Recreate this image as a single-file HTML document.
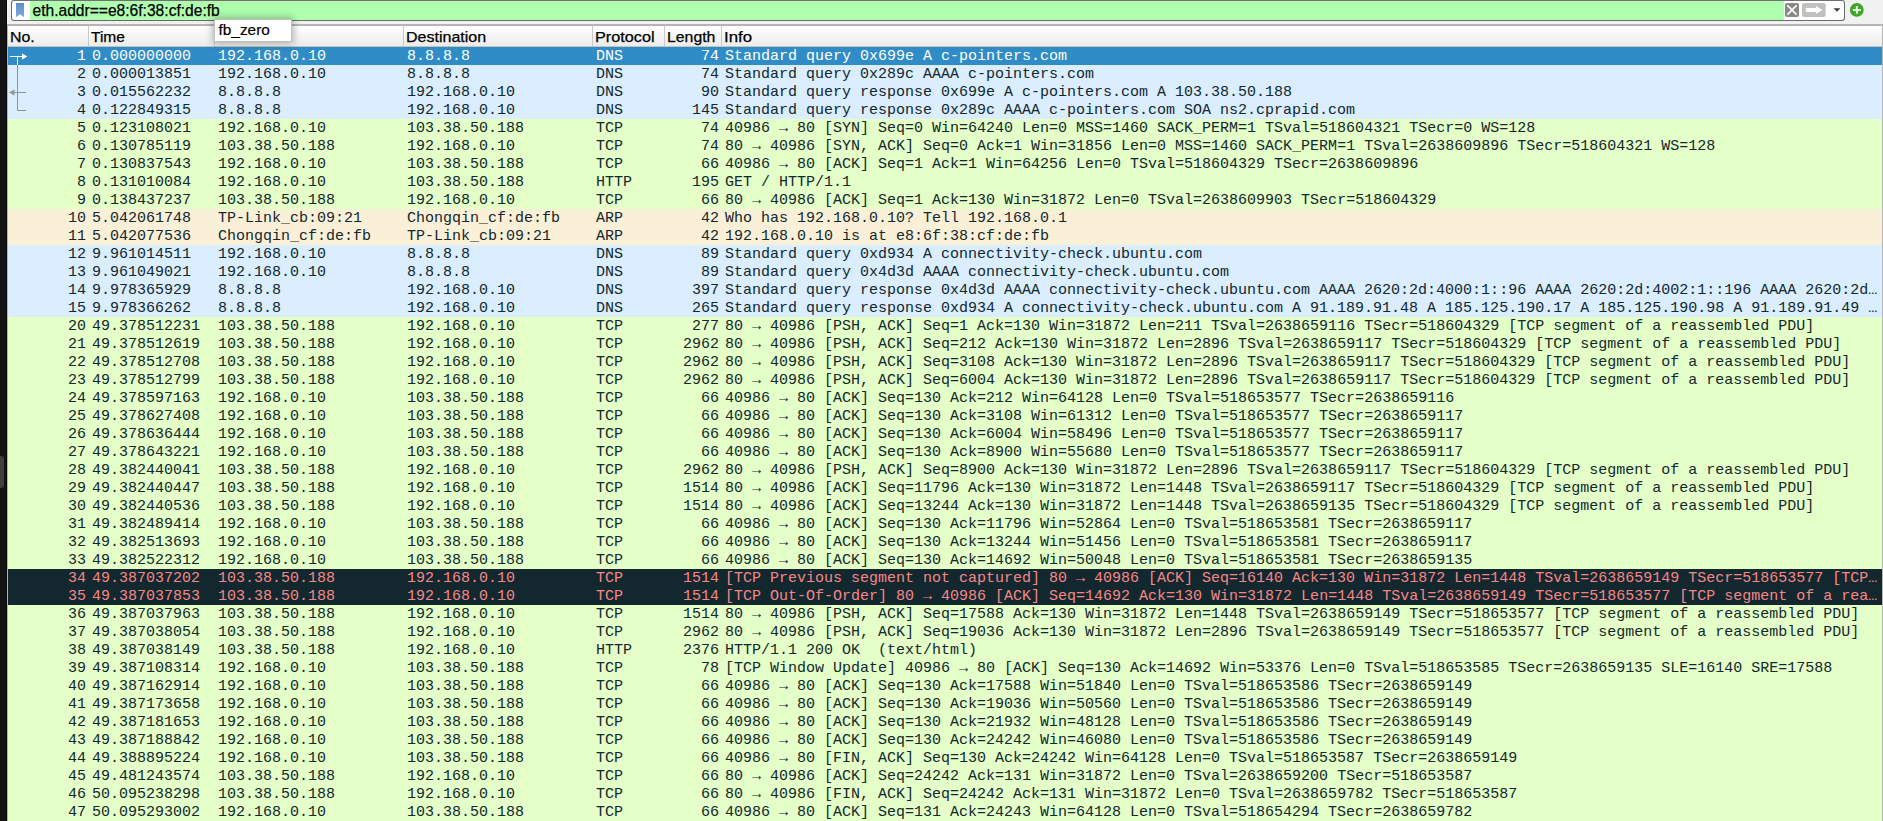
<!DOCTYPE html>
<html><head><meta charset="utf-8"><title>Wireshark</title>
<style>
html,body{margin:0;padding:0;}
body{width:1883px;height:821px;overflow:hidden;background:#f1f1f1;position:relative;font-family:"Liberation Sans",sans-serif;}
#strip{position:absolute;left:0;top:0;width:6px;height:821px;background:#141414;border-right:1px solid #0a0a0a;}
#pill{position:absolute;left:0;top:456px;width:4px;height:32px;background:#404040;border-radius:0 3px 3px 0;}
#fbox{position:absolute;left:11px;top:0px;width:1832px;height:19px;border:1px solid #6a6a6a;border-top-color:#707070;border-radius:3px;background:#fff;overflow:hidden;}
#fgreen{position:absolute;left:18px;top:0;width:1754px;height:19px;background:#afffaf;}
#ftext{-webkit-text-stroke:0.25px #000;position:absolute;left:32.5px;top:1.5px;font-size:15.6px;line-height:18px;color:#000;white-space:pre;}
#sepline{position:absolute;left:7px;top:24px;width:1876px;height:797px;background:#b6b6b6;}
#hdr{position:absolute;left:8px;top:26px;width:1874px;height:20px;background:linear-gradient(#ffffff,#ececec);border-bottom:1px solid #c8c2bc;}
#hdr span{-webkit-text-stroke:0.25px #000;position:absolute;top:2px;font-size:15px;line-height:18px;color:#000;white-space:pre;transform-origin:0 50%;}
#hdr b{position:absolute;top:0px;width:1px;height:20px;background:#c9c9c9;}
#tbl{position:absolute;left:8px;top:47px;width:1874px;height:774px;overflow:hidden;font-family:"Liberation Mono",monospace;font-size:15px;color:#12272e;}
.r{position:absolute;left:0;width:1874px;height:18px;line-height:18px;white-space:pre;overflow:hidden;}
.r span{position:absolute;top:1px;height:18px;}
.r i{font-style:normal;}
.n{left:0;width:78px;text-align:right;}
.t{left:84px;}
.s{left:210px;}
.d{left:399px;}
.p{left:588px;}
.l{left:600px;width:111px;text-align:right;}
.i{left:717px;}
.dns{background:#daeeff;}
.tcp{background:#e4ffc7;}
.arp{background:#faf0d7;}
.bad{background:#12272e;color:#f78787;}
.sel{background:#308cc6;color:#fff;}
#tip{position:absolute;left:214px;top:19px;width:76px;height:21px;background:#fff;border:1px solid #c0c0c0;box-shadow:0 0 8px 1px rgba(0,0,0,0.33);}
#tip span{-webkit-text-stroke:0.2px #000;position:absolute;left:3.5px;top:0.5px;font-size:15.4px;line-height:18px;color:#000;}
</style></head><body>
<div id="strip"></div><div id="pill"></div>
<div id="fbox"><div id="fgreen"></div>
<svg style="position:absolute;left:0;top:-1px" width="20" height="21" viewBox="0 0 20 21"><defs><linearGradient id="bm" x1="0" y1="0" x2="0" y2="1"><stop offset="0" stop-color="#5f8fcb"/><stop offset="1" stop-color="#7ea9dc"/></linearGradient></defs><path d="M4 3h8v14.2l-4-3-4 3z" fill="url(#bm)"/></svg>
</div>
<div id="ftext">eth.addr==e8:6f:38:cf:de:fb</div>
<svg id="icons" style="position:absolute;left:1780px;top:0" width="90" height="21" viewBox="1780 0 90 21">
<rect x="1785" y="3" width="14" height="14" rx="2.2" fill="#888a85"/>
<path d="M1787.4 5.4l9.2 9.2M1796.6 5.4l-9.2 9.2" stroke="#fff" stroke-width="1.5" fill="none"/>
<rect x="1802" y="3" width="23.7" height="14" rx="2.2" fill="#c0c0c0"/>
<path d="M1805.8 8.1h10.1V6l6.5 4.05-6.5 4.05v-2.1h-10.1z" fill="#fff"/>
<path d="M1833.6 8.2h6.8l-3.4 3.6z" fill="#3c3c3c"/>
<circle cx="1856.8" cy="9.9" r="6.9" fill="#3ea72b"/>
<path d="M1852.9 9.9h7.9M1856.85 6.1v7.7" stroke="#e6f4e1" stroke-width="2" fill="none"/>
</svg>
<div id="sepline"></div>
<div id="hdr">
<span style="left:2px;transform:scaleX(1.06)">No.</span><span style="left:83px;transform:scaleX(1.035)">Time</span><span style="left:209px;transform:scaleX(1.06);clip-path:inset(0 0 6px 0)">Source</span><span style="left:398px;transform:scaleX(1.068)">Destination</span><span style="left:587px;transform:scaleX(1.083)">Protocol</span><span style="left:659px;transform:scaleX(1.055)">Length</span><span style="left:716px;transform:scaleX(1.12)">Info</span>
<b style="left:80px"></b><b style="left:206px"></b><b style="left:395px"></b><b style="left:584px"></b><b style="left:656px"></b><b style="left:713px"></b>
</div>
<div id="tbl">
<div class="r sel" style="top:0px"><span class="n">1</span><span class="t">0.000000000</span><span class="s">192.168.0.10</span><span class="d">8.8.8.8</span><span class="p">DNS</span><span class="l">74</span><span class="i">Standard query 0x699e A c-pointers.com</span></div>
<div class="r dns" style="top:18px"><span class="n">2</span><span class="t">0.000013851</span><span class="s">192.168.0.10</span><span class="d">8.8.8.8</span><span class="p">DNS</span><span class="l">74</span><span class="i">Standard query 0x289c AAAA c-pointers.com</span></div>
<div class="r dns" style="top:36px"><span class="n">3</span><span class="t">0.015562232</span><span class="s">8.8.8.8</span><span class="d">192.168.0.10</span><span class="p">DNS</span><span class="l">90</span><span class="i">Standard query response 0x699e A c-pointers.com A 103.38.50.188</span></div>
<div class="r dns" style="top:54px"><span class="n">4</span><span class="t">0.122849315</span><span class="s">8.8.8.8</span><span class="d">192.168.0.10</span><span class="p">DNS</span><span class="l">145</span><span class="i">Standard query response 0x289c AAAA c-pointers.com SOA ns2.cprapid.com</span></div>
<div class="r tcp" style="top:72px"><span class="n">5</span><span class="t">0.123108021</span><span class="s">192.168.0.10</span><span class="d">103.38.50.188</span><span class="p">TCP</span><span class="l">74</span><span class="i">40986 <i>→</i> 80 [SYN] Seq=0 Win=64240 Len=0 MSS=1460 SACK_PERM=1 TSval=518604321 TSecr=0 WS=128</span></div>
<div class="r tcp" style="top:90px"><span class="n">6</span><span class="t">0.130785119</span><span class="s">103.38.50.188</span><span class="d">192.168.0.10</span><span class="p">TCP</span><span class="l">74</span><span class="i">80 <i>→</i> 40986 [SYN, ACK] Seq=0 Ack=1 Win=31856 Len=0 MSS=1460 SACK_PERM=1 TSval=2638609896 TSecr=518604321 WS=128</span></div>
<div class="r tcp" style="top:108px"><span class="n">7</span><span class="t">0.130837543</span><span class="s">192.168.0.10</span><span class="d">103.38.50.188</span><span class="p">TCP</span><span class="l">66</span><span class="i">40986 <i>→</i> 80 [ACK] Seq=1 Ack=1 Win=64256 Len=0 TSval=518604329 TSecr=2638609896</span></div>
<div class="r tcp" style="top:126px"><span class="n">8</span><span class="t">0.131010084</span><span class="s">192.168.0.10</span><span class="d">103.38.50.188</span><span class="p">HTTP</span><span class="l">195</span><span class="i">GET / HTTP/1.1</span></div>
<div class="r tcp" style="top:144px"><span class="n">9</span><span class="t">0.138437237</span><span class="s">103.38.50.188</span><span class="d">192.168.0.10</span><span class="p">TCP</span><span class="l">66</span><span class="i">80 <i>→</i> 40986 [ACK] Seq=1 Ack=130 Win=31872 Len=0 TSval=2638609903 TSecr=518604329</span></div>
<div class="r arp" style="top:162px"><span class="n">10</span><span class="t">5.042061748</span><span class="s">TP-Link_cb:09:21</span><span class="d">Chongqin_cf:de:fb</span><span class="p">ARP</span><span class="l">42</span><span class="i">Who has 192.168.0.10? Tell 192.168.0.1</span></div>
<div class="r arp" style="top:180px"><span class="n">11</span><span class="t">5.042077536</span><span class="s">Chongqin_cf:de:fb</span><span class="d">TP-Link_cb:09:21</span><span class="p">ARP</span><span class="l">42</span><span class="i">192.168.0.10 is at e8:6f:38:cf:de:fb</span></div>
<div class="r dns" style="top:198px"><span class="n">12</span><span class="t">9.961014511</span><span class="s">192.168.0.10</span><span class="d">8.8.8.8</span><span class="p">DNS</span><span class="l">89</span><span class="i">Standard query 0xd934 A connectivity-check.ubuntu.com</span></div>
<div class="r dns" style="top:216px"><span class="n">13</span><span class="t">9.961049021</span><span class="s">192.168.0.10</span><span class="d">8.8.8.8</span><span class="p">DNS</span><span class="l">89</span><span class="i">Standard query 0x4d3d AAAA connectivity-check.ubuntu.com</span></div>
<div class="r dns" style="top:234px"><span class="n">14</span><span class="t">9.978365929</span><span class="s">8.8.8.8</span><span class="d">192.168.0.10</span><span class="p">DNS</span><span class="l">397</span><span class="i">Standard query response 0x4d3d AAAA connectivity-check.ubuntu.com AAAA 2620:2d:4000:1::96 AAAA 2620:2d:4002:1::196 AAAA 2620:2d…</span></div>
<div class="r dns" style="top:252px"><span class="n">15</span><span class="t">9.978366262</span><span class="s">8.8.8.8</span><span class="d">192.168.0.10</span><span class="p">DNS</span><span class="l">265</span><span class="i">Standard query response 0xd934 A connectivity-check.ubuntu.com A 91.189.91.48 A 185.125.190.17 A 185.125.190.98 A 91.189.91.49 …</span></div>
<div class="r tcp" style="top:270px"><span class="n">20</span><span class="t">49.378512231</span><span class="s">103.38.50.188</span><span class="d">192.168.0.10</span><span class="p">TCP</span><span class="l">277</span><span class="i">80 <i>→</i> 40986 [PSH, ACK] Seq=1 Ack=130 Win=31872 Len=211 TSval=2638659116 TSecr=518604329 [TCP segment of a reassembled PDU]</span></div>
<div class="r tcp" style="top:288px"><span class="n">21</span><span class="t">49.378512619</span><span class="s">103.38.50.188</span><span class="d">192.168.0.10</span><span class="p">TCP</span><span class="l">2962</span><span class="i">80 <i>→</i> 40986 [PSH, ACK] Seq=212 Ack=130 Win=31872 Len=2896 TSval=2638659117 TSecr=518604329 [TCP segment of a reassembled PDU]</span></div>
<div class="r tcp" style="top:306px"><span class="n">22</span><span class="t">49.378512708</span><span class="s">103.38.50.188</span><span class="d">192.168.0.10</span><span class="p">TCP</span><span class="l">2962</span><span class="i">80 <i>→</i> 40986 [PSH, ACK] Seq=3108 Ack=130 Win=31872 Len=2896 TSval=2638659117 TSecr=518604329 [TCP segment of a reassembled PDU]</span></div>
<div class="r tcp" style="top:324px"><span class="n">23</span><span class="t">49.378512799</span><span class="s">103.38.50.188</span><span class="d">192.168.0.10</span><span class="p">TCP</span><span class="l">2962</span><span class="i">80 <i>→</i> 40986 [PSH, ACK] Seq=6004 Ack=130 Win=31872 Len=2896 TSval=2638659117 TSecr=518604329 [TCP segment of a reassembled PDU]</span></div>
<div class="r tcp" style="top:342px"><span class="n">24</span><span class="t">49.378597163</span><span class="s">192.168.0.10</span><span class="d">103.38.50.188</span><span class="p">TCP</span><span class="l">66</span><span class="i">40986 <i>→</i> 80 [ACK] Seq=130 Ack=212 Win=64128 Len=0 TSval=518653577 TSecr=2638659116</span></div>
<div class="r tcp" style="top:360px"><span class="n">25</span><span class="t">49.378627408</span><span class="s">192.168.0.10</span><span class="d">103.38.50.188</span><span class="p">TCP</span><span class="l">66</span><span class="i">40986 <i>→</i> 80 [ACK] Seq=130 Ack=3108 Win=61312 Len=0 TSval=518653577 TSecr=2638659117</span></div>
<div class="r tcp" style="top:378px"><span class="n">26</span><span class="t">49.378636444</span><span class="s">192.168.0.10</span><span class="d">103.38.50.188</span><span class="p">TCP</span><span class="l">66</span><span class="i">40986 <i>→</i> 80 [ACK] Seq=130 Ack=6004 Win=58496 Len=0 TSval=518653577 TSecr=2638659117</span></div>
<div class="r tcp" style="top:396px"><span class="n">27</span><span class="t">49.378643221</span><span class="s">192.168.0.10</span><span class="d">103.38.50.188</span><span class="p">TCP</span><span class="l">66</span><span class="i">40986 <i>→</i> 80 [ACK] Seq=130 Ack=8900 Win=55680 Len=0 TSval=518653577 TSecr=2638659117</span></div>
<div class="r tcp" style="top:414px"><span class="n">28</span><span class="t">49.382440041</span><span class="s">103.38.50.188</span><span class="d">192.168.0.10</span><span class="p">TCP</span><span class="l">2962</span><span class="i">80 <i>→</i> 40986 [PSH, ACK] Seq=8900 Ack=130 Win=31872 Len=2896 TSval=2638659117 TSecr=518604329 [TCP segment of a reassembled PDU]</span></div>
<div class="r tcp" style="top:432px"><span class="n">29</span><span class="t">49.382440447</span><span class="s">103.38.50.188</span><span class="d">192.168.0.10</span><span class="p">TCP</span><span class="l">1514</span><span class="i">80 <i>→</i> 40986 [ACK] Seq=11796 Ack=130 Win=31872 Len=1448 TSval=2638659117 TSecr=518604329 [TCP segment of a reassembled PDU]</span></div>
<div class="r tcp" style="top:450px"><span class="n">30</span><span class="t">49.382440536</span><span class="s">103.38.50.188</span><span class="d">192.168.0.10</span><span class="p">TCP</span><span class="l">1514</span><span class="i">80 <i>→</i> 40986 [ACK] Seq=13244 Ack=130 Win=31872 Len=1448 TSval=2638659135 TSecr=518604329 [TCP segment of a reassembled PDU]</span></div>
<div class="r tcp" style="top:468px"><span class="n">31</span><span class="t">49.382489414</span><span class="s">192.168.0.10</span><span class="d">103.38.50.188</span><span class="p">TCP</span><span class="l">66</span><span class="i">40986 <i>→</i> 80 [ACK] Seq=130 Ack=11796 Win=52864 Len=0 TSval=518653581 TSecr=2638659117</span></div>
<div class="r tcp" style="top:486px"><span class="n">32</span><span class="t">49.382513693</span><span class="s">192.168.0.10</span><span class="d">103.38.50.188</span><span class="p">TCP</span><span class="l">66</span><span class="i">40986 <i>→</i> 80 [ACK] Seq=130 Ack=13244 Win=51456 Len=0 TSval=518653581 TSecr=2638659117</span></div>
<div class="r tcp" style="top:504px"><span class="n">33</span><span class="t">49.382522312</span><span class="s">192.168.0.10</span><span class="d">103.38.50.188</span><span class="p">TCP</span><span class="l">66</span><span class="i">40986 <i>→</i> 80 [ACK] Seq=130 Ack=14692 Win=50048 Len=0 TSval=518653581 TSecr=2638659135</span></div>
<div class="r bad" style="top:522px"><span class="n">34</span><span class="t">49.387037202</span><span class="s">103.38.50.188</span><span class="d">192.168.0.10</span><span class="p">TCP</span><span class="l">1514</span><span class="i">[TCP Previous segment not captured] 80 <i>→</i> 40986 [ACK] Seq=16140 Ack=130 Win=31872 Len=1448 TSval=2638659149 TSecr=518653577 [TCP…</span></div>
<div class="r bad" style="top:540px"><span class="n">35</span><span class="t">49.387037853</span><span class="s">103.38.50.188</span><span class="d">192.168.0.10</span><span class="p">TCP</span><span class="l">1514</span><span class="i">[TCP Out-Of-Order] 80 <i>→</i> 40986 [ACK] Seq=14692 Ack=130 Win=31872 Len=1448 TSval=2638659149 TSecr=518653577 [TCP segment of a rea…</span></div>
<div class="r tcp" style="top:558px"><span class="n">36</span><span class="t">49.387037963</span><span class="s">103.38.50.188</span><span class="d">192.168.0.10</span><span class="p">TCP</span><span class="l">1514</span><span class="i">80 <i>→</i> 40986 [PSH, ACK] Seq=17588 Ack=130 Win=31872 Len=1448 TSval=2638659149 TSecr=518653577 [TCP segment of a reassembled PDU]</span></div>
<div class="r tcp" style="top:576px"><span class="n">37</span><span class="t">49.387038054</span><span class="s">103.38.50.188</span><span class="d">192.168.0.10</span><span class="p">TCP</span><span class="l">2962</span><span class="i">80 <i>→</i> 40986 [PSH, ACK] Seq=19036 Ack=130 Win=31872 Len=2896 TSval=2638659149 TSecr=518653577 [TCP segment of a reassembled PDU]</span></div>
<div class="r tcp" style="top:594px"><span class="n">38</span><span class="t">49.387038149</span><span class="s">103.38.50.188</span><span class="d">192.168.0.10</span><span class="p">HTTP</span><span class="l">2376</span><span class="i">HTTP/1.1 200 OK  (text/html)</span></div>
<div class="r tcp" style="top:612px"><span class="n">39</span><span class="t">49.387108314</span><span class="s">192.168.0.10</span><span class="d">103.38.50.188</span><span class="p">TCP</span><span class="l">78</span><span class="i">[TCP Window Update] 40986 <i>→</i> 80 [ACK] Seq=130 Ack=14692 Win=53376 Len=0 TSval=518653585 TSecr=2638659135 SLE=16140 SRE=17588</span></div>
<div class="r tcp" style="top:630px"><span class="n">40</span><span class="t">49.387162914</span><span class="s">192.168.0.10</span><span class="d">103.38.50.188</span><span class="p">TCP</span><span class="l">66</span><span class="i">40986 <i>→</i> 80 [ACK] Seq=130 Ack=17588 Win=51840 Len=0 TSval=518653586 TSecr=2638659149</span></div>
<div class="r tcp" style="top:648px"><span class="n">41</span><span class="t">49.387173658</span><span class="s">192.168.0.10</span><span class="d">103.38.50.188</span><span class="p">TCP</span><span class="l">66</span><span class="i">40986 <i>→</i> 80 [ACK] Seq=130 Ack=19036 Win=50560 Len=0 TSval=518653586 TSecr=2638659149</span></div>
<div class="r tcp" style="top:666px"><span class="n">42</span><span class="t">49.387181653</span><span class="s">192.168.0.10</span><span class="d">103.38.50.188</span><span class="p">TCP</span><span class="l">66</span><span class="i">40986 <i>→</i> 80 [ACK] Seq=130 Ack=21932 Win=48128 Len=0 TSval=518653586 TSecr=2638659149</span></div>
<div class="r tcp" style="top:684px"><span class="n">43</span><span class="t">49.387188842</span><span class="s">192.168.0.10</span><span class="d">103.38.50.188</span><span class="p">TCP</span><span class="l">66</span><span class="i">40986 <i>→</i> 80 [ACK] Seq=130 Ack=24242 Win=46080 Len=0 TSval=518653586 TSecr=2638659149</span></div>
<div class="r tcp" style="top:702px"><span class="n">44</span><span class="t">49.388895224</span><span class="s">192.168.0.10</span><span class="d">103.38.50.188</span><span class="p">TCP</span><span class="l">66</span><span class="i">40986 <i>→</i> 80 [FIN, ACK] Seq=130 Ack=24242 Win=64128 Len=0 TSval=518653587 TSecr=2638659149</span></div>
<div class="r tcp" style="top:720px"><span class="n">45</span><span class="t">49.481243574</span><span class="s">103.38.50.188</span><span class="d">192.168.0.10</span><span class="p">TCP</span><span class="l">66</span><span class="i">80 <i>→</i> 40986 [ACK] Seq=24242 Ack=131 Win=31872 Len=0 TSval=2638659200 TSecr=518653587</span></div>
<div class="r tcp" style="top:738px"><span class="n">46</span><span class="t">50.095238298</span><span class="s">103.38.50.188</span><span class="d">192.168.0.10</span><span class="p">TCP</span><span class="l">66</span><span class="i">80 <i>→</i> 40986 [FIN, ACK] Seq=24242 Ack=131 Win=31872 Len=0 TSval=2638659782 TSecr=518653587</span></div>
<div class="r tcp" style="top:756px"><span class="n">47</span><span class="t">50.095293002</span><span class="s">192.168.0.10</span><span class="d">103.38.50.188</span><span class="p">TCP</span><span class="l">66</span><span class="i">40986 <i>→</i> 80 [ACK] Seq=131 Ack=24243 Win=64128 Len=0 TSval=518654294 TSecr=2638659782</span></div>
</div>
<svg id="rel" style="position:absolute;left:0;top:47px" width="40" height="80" viewBox="0 0 40 80">
<path d="M10 9.5H23" stroke="#fff" stroke-width="1" fill="none"/>
<path d="M22 6.5l5.5 3-5.5 3z" fill="#fff"/>
<path d="M17.5 10V18" stroke="#fff" stroke-width="1" fill="none"/>
<path d="M17.5 18V63.5H26" stroke="#8f9396" stroke-width="1" fill="none"/>
<path d="M13 45.5H26" stroke="#8f9396" stroke-width="1" fill="none"/>
<path d="M14.5 42.5l-5.5 3 5.5 3z" fill="#8f9396"/>
</svg>
<div id="tip"><span>fb_zero</span></div>
</body></html>
